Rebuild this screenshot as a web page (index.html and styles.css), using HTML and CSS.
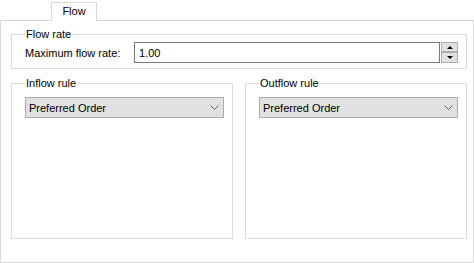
FILE: index.html
```html
<!DOCTYPE html>
<html lang="en">
<head>
    <meta charset="UTF-8">
    <title>Flow</title>
    <link rel="stylesheet" href="styles.css">
</head>
<body>
    <div class="tabs">
        <div class="tab">Flow</div>
    </div>
    <div class="panel">
        <fieldset class="group rate-group">
            <legend>Flow rate</legend>
            <div class="rate-row">
                <label for="max-rate">Maximum flow rate:</label>
                <div class="spin">
                    <input id="max-rate" type="text" value="1.00">
                    <div class="spin-buttons">
                        <span class="spin-btn"><span class="arrow-up"></span></span>
                        <span class="spin-btn"><span class="arrow-down"></span></span>
                    </div>
                </div>
            </div>
        </fieldset>

        <div class="rules">
            <fieldset class="group rule-group">
                <legend>Inflow rule</legend>
                <div class="combo">
                    <span>Preferred Order</span>
                    <svg width="9" height="5" viewBox="0 0 9 5"><path d="M0.5 0.5 L4.5 4.5 L8.5 0.5" fill="none" stroke="#606060" stroke-width="1"/></svg>
                </div>
            </fieldset>
            <fieldset class="group rule-group">
                <legend>Outflow rule</legend>
                <div class="combo">
                    <span>Preferred Order</span>
                    <svg width="9" height="5" viewBox="0 0 9 5"><path d="M0.5 0.5 L4.5 4.5 L8.5 0.5" fill="none" stroke="#606060" stroke-width="1"/></svg>
                </div>
            </fieldset>
        </div>
    </div>
</body>
</html>
```

FILE: styles.css
```css
body {
    margin: 0;
    background: #fff;
    font-family: "Liberation Sans", Arial, sans-serif;
    font-size: 11px;
    color: #000;
    width: 474px;
    height: 263px;
}

.tabs {
    height: 20px;
    padding-left: 51px;
    box-sizing: border-box;
    display: flex;
    align-items: flex-end;
}
.tab {
    width: 46px;
    height: 19px;
    box-sizing: border-box;
    border: 1px solid #d9d9d9;
    border-bottom: none;
    background: #fff;
    text-align: center;
    line-height: 16px;
    position: relative;
    top: 1px;
}

.panel {
    border: 1px solid #d9d9d9;
    height: 243px;
    box-sizing: border-box;
    padding: 6px 6px 0 10px;
}

.group {
    margin: 0;
    border: 1px solid #dcdcdc;
    padding: 0;
    box-sizing: border-box;
}
.group legend {
    padding: 0 1px;
    line-height: 14px;
}

.rate-group {
    height: 42px;
    padding: 1px 8px 0 13px;
}
.rate-row {
    display: flex;
    align-items: center;
}
.rate-row label {
    width: 109px;
}
.spin {
    display: flex;
    flex: 1;
}
.spin input {
    flex: 1;
    height: 21px;
    box-sizing: border-box;
    border: 1px solid #7a7a7a;
    font: inherit;
    padding: 0 4px;
    margin: 0;
    outline: none;
}
.spin-buttons {
    display: flex;
    flex-direction: column;
    width: 17px;
    margin-left: 1px;
}
.spin-btn {
    height: 10px;
    border: 1px solid #adadad;
    background: #e1e1e1;
    box-sizing: border-box;
    display: flex;
    align-items: center;
    justify-content: center;
}
.spin-btn + .spin-btn {
    height: 11px;
}
.arrow-up {
    border-left: 3px solid transparent;
    border-right: 3px solid transparent;
    border-bottom: 3px solid #000;
}
.arrow-down {
    border-left: 3px solid transparent;
    border-right: 3px solid transparent;
    border-top: 3px solid #000;
}

.rules {
    display: flex;
    gap: 12px;
    margin-top: 7px;
}
.rule-group {
    flex: 1;
    height: 163px;
    padding: 7px 8px 0 13px;
}
.combo {
    height: 21px;
    box-sizing: border-box;
    border: 1px solid #adadad;
    background: #e1e1e1;
    display: flex;
    align-items: center;
    justify-content: space-between;
    padding: 0 4px 0 3px;
}
```
